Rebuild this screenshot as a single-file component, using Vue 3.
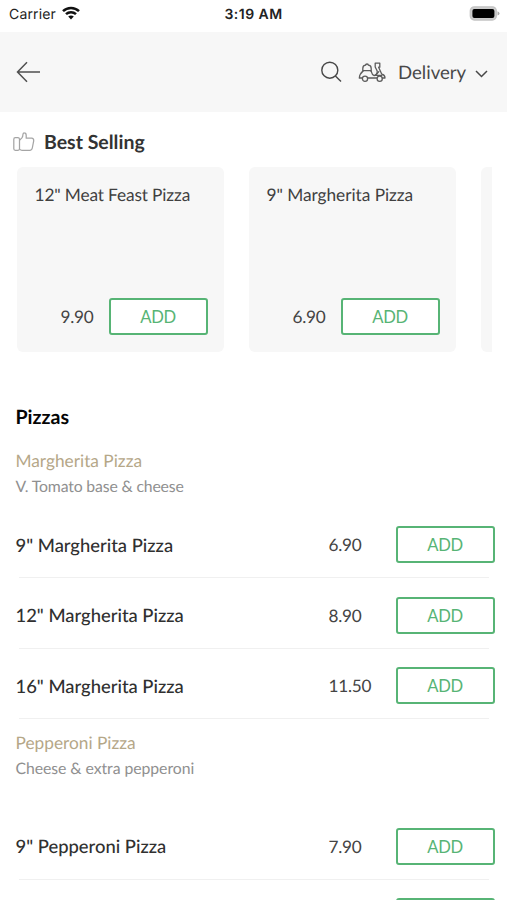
<script setup>
const featured = [
  { name: '12" Meat Feast Pizza', price: '9.90', cls: 'meat' },
  { name: '9" Margherita Pizza', price: '6.90', cls: '' }
]
const groups = [
  {
    name: 'Margherita Pizza',
    note: 'V. Tomato base & cheese',
    cls: 'first',
    items: [
      { name: '9" Margherita Pizza', price: '6.90' },
      { name: '12" Margherita Pizza', price: '8.90' },
      { name: '16" Margherita Pizza', price: '11.50' }
    ]
  },
  {
    name: 'Pepperoni Pizza',
    note: 'Cheese & extra pepperoni',
    cls: 'second',
    items: [
      { name: '9" Pepperoni Pizza', price: '7.90' },
      { name: '', price: '' }
    ]
  }
]
</script>

<template>
  <div class="screen">
    <div class="status">
      <div class="carrier">
        <span>Carrier</span>
        <svg width="18" height="14" viewBox="0 0 18 14">
          <g fill="none" stroke="#111" stroke-width="2.5">
            <path d="M1 5.1C5.4.8 12.6.8 17 5.1" />
            <path d="M4 8.2C6.8 5.5 11.2 5.5 14 8.2" />
          </g>
          <path d="M6.2 10.6C7.8 9.1 10.2 9.1 11.8 10.6L9 13.5Z" fill="#111" />
        </svg>
      </div>
      <div class="time">3:19 AM</div>
      <div class="power">
        <svg width="31" height="15" viewBox="0 0 31 15">
          <rect x="1.3" y=".8" width="26" height="13.2" rx="4" fill="#ccc" stroke="#c4c4c4" stroke-width="1.3" />
          <rect x="3.4" y="2.9" width="22" height="9" rx="2" fill="#000" />
          <path d="M28.5 5.2Q30.5 6 30.5 7.4T28.5 9.6Z" fill="#aaa" />
        </svg>
      </div>
    </div>

    <header class="bar">
      <svg class="back" width="25" height="22" viewBox="0 0 25 22" fill="none" stroke="#505050" stroke-width="1.5">
        <path d="M24 11H1.5M11 1.2L1.5 11L11 20.8" />
      </svg>
      <div class="mode">
        <svg width="22" height="22" viewBox="0 0 22 22" fill="none" stroke="#484848" stroke-width="1.4">
          <circle cx="9.8" cy="9.2" r="8" />
          <path d="M15.4 15l5.6 5.6" />
        </svg>
        <svg class="scooter" width="28" height="21" viewBox="0 0 28 21" fill="none" stroke="#5c5c5c" stroke-width="1.3" stroke-linejoin="round" stroke-linecap="round">
          <path d="M4.8 9.4V6.5Q4.8 3.2 7.6 3.2Q7.6 2 9 2T10.4 3.2Q13.2 3.2 13.2 6.5V9.4M4.8 8.6H13.2" />
          <path d="M4.8 9.4Q1.8 11.5 1.3 16H4.3M9.8 16H18.7M13.2 9.4Q14 12.8 16.2 13.6Q19.6 12.5 19.2 9L17.2 5V1.2H21.8V5.2H20.6L23.8 12.2Q27 13 27 16H24.3" />
          <path d="M20.8 9.6L17.6 13.4H23.8" />
          <circle cx="7" cy="16.8" r="2.6" />
          <circle cx="21.7" cy="16.8" r="2.6" />
        </svg>
        <span class="delivery">Delivery</span>
        <svg class="chevron" width="13" height="8" viewBox="0 0 13 8" fill="none" stroke="#484848" stroke-width="1.5">
          <path d="M1 1l5.5 5.5L12 1" />
        </svg>
      </div>
    </header>

    <section class="best">
      <h2>
        <svg width="22" height="20" viewBox="0 0 22 20" fill="none" stroke="#a5a5a5" stroke-width="1.25" stroke-linejoin="round">
          <path d="M6.5 7.2Q6.3 5.7 5 5.7H2.3Q.8 5.7.8 7.2V16.8Q.8 18.3 2.3 18.3H5Q6.5 18.3 6.5 16.8Z" />
          <path d="M6.5 8.2L8.7 6.1Q9.9 4.8 10 2.2Q10.2.7 11.3.8Q13.2.9 13.2 3.4V6.2H18.6Q20.9 6.4 20.7 8.8L19.3 16Q18.9 18.3 16.8 18.3H9Q7.8 18.3 6.5 17.3" />
        </svg>
        <span>Best Selling</span>
      </h2>
      <div class="cards">
        <article v-for="f in featured" :key="f.name" class="card">
          <div class="title" :class="f.cls">{{ f.name }}</div>
          <div class="buy">
            <span class="price">{{ f.price }}</span>
            <button class="add">ADD</button>
          </div>
        </article>
        <article class="card"></article>
      </div>
    </section>

    <main class="menu">
      <h1>Pizzas</h1>
      <section v-for="g in groups" :key="g.name" :class="g.cls">
        <h3>{{ g.name }}</h3>
        <p>{{ g.note }}</p>
        <div class="items">
          <div v-for="i in g.items" :key="i.name" class="item">
            <div class="line">
              <span class="name">{{ i.name }}</span>
              <span class="price">{{ i.price }}</span>
              <button class="add">{{ i.name ? 'ADD' : '' }}</button>
            </div>
            <div class="rule"></div>
          </div>
        </div>
      </section>
    </main>
  </div>
</template>

<style>
body {
  background: #fff;
}
</style>

<style scoped>
* {
  box-sizing: border-box;
}
.screen {
  width: 507px;
  height: 900px;
  overflow: hidden;
  background: #fff;
  font-family: Lato, sans-serif;
  color: #333;
  text-rendering: geometricPrecision;
}
svg {
  display: block;
  flex: none;
}
.status {
  height: 32px;
  display: grid;
  grid-template-columns: 1fr auto 1fr;
  align-items: center;
  padding: 0 7px 4px 9px;
  font-family: Inter, sans-serif;
  font-size: 14px;
  color: #222;
}
.carrier {
  display: flex;
  align-items: center;
  gap: 6px;
}
.carrier span {
  width: 47px;
  letter-spacing: 0.15px;
}
.carrier svg {
  margin-top: -2px;
}
.time {
  font-weight: 600;
  font-size: 14px;
  letter-spacing: 0.45px;
  margin: 0 2px 0 0;
}
.power {
  display: flex;
  justify-content: flex-end;
  margin-top: -2px;
}
.bar {
  height: 80px;
  background: #f7f7f7;
  display: flex;
  align-items: center;
  justify-content: space-between;
  padding: 0 19px 0 16px;
}
.mode {
  display: flex;
  align-items: center;
}
.scooter {
  margin-left: 16px;
}
.delivery {
  width: 69px;
  margin-left: 12px;
  line-height: 22px;
  font-size: 18.6px;
  color: #484848;
  white-space: nowrap;
}
.chevron {
  margin-left: 8px;
  margin-top: 3px;
}
h1,
h2,
h3,
p {
  margin: 0;
}
.best {
  padding: 18px 15px 0 13px;
}
h2 {
  display: flex;
  align-items: center;
  gap: 9px;
  height: 24px;
  font-size: 19.5px;
  line-height: 24px;
  font-weight: 700;
}
h2 span {
  padding-top: 2px;
}
.cards {
  display: flex;
  gap: 25px;
  margin: 13px 0 0 4px;
  overflow: hidden;
}
.card {
  flex: none;
  width: 207px;
  height: 185px;
  border-radius: 6px;
  background: #f7f7f7;
  padding: 16px 16.5px 17px 17.5px;
  display: flex;
  flex-direction: column;
  justify-content: space-between;
}
.title {
  font-size: 17.3px;
  line-height: 24px;
  color: #404040;
  white-space: nowrap;
  letter-spacing: -0.04px;
}
.meat {
  letter-spacing: -0.14px;
}
.buy {
  display: flex;
  justify-content: flex-end;
  align-items: center;
  gap: 15px;
}
.price {
  font-size: 17.2px;
  letter-spacing: -0.25px;
  color: #444;
}
.add {
  width: 99px;
  height: 37px;
  padding: 1px 0 0;
  border: 2px solid #57b475;
  border-radius: 3px;
  background: #fff;
  color: #57b475;
  font-family: Lato, sans-serif;
  font-size: 16.6px;
  letter-spacing: -0.3px;
  line-height: 32px;
}
.menu {
  padding: 53px 12px 0 15.5px;
}
h1 {
  font-size: 19.6px;
  line-height: 25px;
  font-weight: 700;
  color: #050505;
}
h3 {
  font-size: 17.3px;
  line-height: 26px;
  font-weight: 400;
  color: #b5a788;
}
p {
  font-size: 15.8px;
  line-height: 26px;
  letter-spacing: -0.06px;
  color: #909090;
}
.first {
  padding-top: 18px;
}
.first p {
  letter-spacing: -0.17px;
}
.first .items {
  padding-top: 8px;
}
.second {
  padding-top: 10px;
}
.second .items {
  padding-top: 28px;
}
.item {
  height: 70.6px;
  padding-top: 18px;
}
.line {
  display: grid;
  grid-template-columns: 312px 68px 99px;
  align-items: center;
  height: 37px;
}
.name {
  font-size: 18.4px;
  font-weight: 500;
  color: #303030;
}
.line .price {
  padding-left: 1px;
}
.rule {
  height: 1px;
  margin: 14px 6px 0 3px;
  background: #f0f0f0;
}
</style>
